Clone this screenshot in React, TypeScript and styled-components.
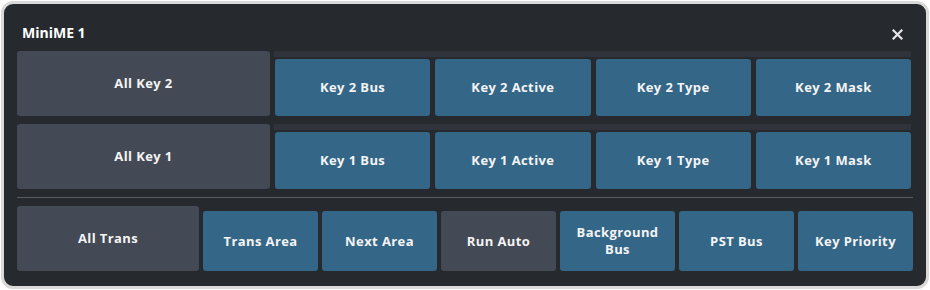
import styled, { createGlobalStyle } from 'styled-components'

const GlobalStyle = createGlobalStyle`
    html, body {
        margin: 0;
        padding: 0;
        background: #ffffff;
    }
    body {
        font-family: "Open Sans", "Liberation Sans", sans-serif;
    }
    #root {
        padding: 1px;
    }
`

type Tone = 'gray' | 'blue'

const keyRows = [
    { all: 'All Key 2', items: ['Key 2 Bus', 'Key 2 Active', 'Key 2 Type', 'Key 2 Mask'] },
    { all: 'All Key 1', items: ['Key 1 Bus', 'Key 1 Active', 'Key 1 Type', 'Key 1 Mask'] },
]

const transItems: { label: string; tone: Tone }[] = [
    { label: 'Trans Area', tone: 'blue' },
    { label: 'Next Area', tone: 'blue' },
    { label: 'Run Auto', tone: 'gray' },
    { label: 'Background Bus', tone: 'blue' },
    { label: 'PST Bus', tone: 'blue' },
    { label: 'Key Priority', tone: 'blue' },
]

export default function App() {
    return (
        <>
            <GlobalStyle />
            <Panel>
                <Header>
                    <Title>MiniME 1</Title>
                    <CloseButton aria-label="Close">
                        <svg width="11" height="11" viewBox="0 0 11 11">
                            <path d="M1.5 1.5 L9.5 9.5 M9.5 1.5 L1.5 9.5" stroke="#e6e6e6" strokeWidth="2.2" strokeLinecap="square" />
                        </svg>
                    </CloseButton>
                </Header>

                {keyRows.map(row => (
                    <KeyRow key={row.all}>
                        <Pad tone="gray">{row.all}</Pad>
                        <KeyGroup>
                            <Strip />
                            <KeyButtons>
                                {row.items.map(item => (
                                    <Pad key={item} tone="blue">{item}</Pad>
                                ))}
                            </KeyButtons>
                        </KeyGroup>
                    </KeyRow>
                ))}

                <Divider />

                <TransRow>
                    <Pad tone="gray">All Trans</Pad>
                    {transItems.map(item => (
                        <TransPad key={item.label} tone={item.tone}>{item.label}</TransPad>
                    ))}
                </TransRow>
            </Panel>
        </>
    )
}

const Panel = styled.div`
    box-sizing: border-box;
    width: 928px;
    height: 288px;
    border: 3px solid #d9d9d9;
    border-radius: 12px;
    background: #262a2f;
    padding: 18px 13px 15px 13px;
    display: flex;
    flex-direction: column;
`

const Header = styled.div`
    height: 21px;
    margin-bottom: 8px;
    display: flex;
    align-items: center;
    justify-content: space-between;
`

const Title = styled.div`
    font-size: 14px;
    font-weight: 700;
    line-height: 20px;
    color: #ffffff;
    padding-left: 5px;
`

const CloseButton = styled.div`
    width: 11px;
    height: 11px;
    margin-top: 3px;
    margin-right: 10px;
    display: flex;
`

const KeyRow = styled.div`
    display: grid;
    grid-template-columns: 253px 1fr;
    gap: 4px;
    height: 65px;
    margin-bottom: 8px;
    padding-right: 2px;
`

const KeyGroup = styled.div`
    display: flex;
    flex-direction: column;
`

const Strip = styled.div`
    height: 6px;
    background: #30343a;
    margin-bottom: 2px;
`

const KeyButtons = styled.div`
    flex: 1;
    display: grid;
    grid-template-columns: repeat(4, 1fr);
    gap: 5px;
    padding-left: 1px;
`

const Pad = styled.div<{ tone: Tone }>`
    display: flex;
    align-items: center;
    justify-content: center;
    text-align: center;
    box-sizing: border-box;
    padding: 0 10px;
    border-radius: 3px;
    background: ${p => (p.tone === 'blue' ? '#346688' : '#434955')};
    color: #f4f4f4;
    font-size: 13px;
    font-weight: 700;
    letter-spacing: 0.4px;
    line-height: 17px;
`

const TransPad = styled(Pad)`
    height: 60px;
`

const Divider = styled.div`
    height: 1px;
    background: #575c66;
    margin-bottom: 8px;
`

const TransRow = styled.div`
    display: grid;
    grid-template-columns: 182px repeat(6, 1fr);
    gap: 4px;
    height: 65px;
    align-items: end;

    & > ${Pad}:first-child {
        height: 65px;
    }
`
